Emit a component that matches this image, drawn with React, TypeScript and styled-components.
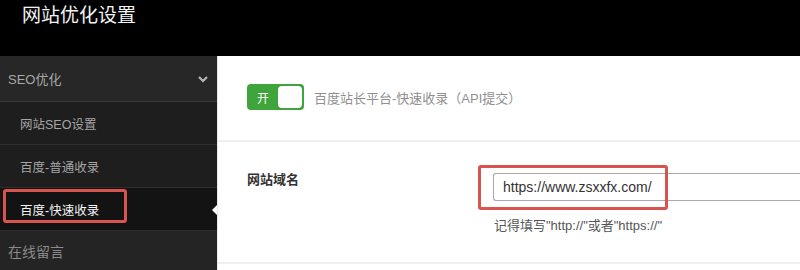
import styled, { createGlobalStyle } from "styled-components";

const Global = createGlobalStyle`
  html, body {
    margin: 0;
    padding: 0;
    background: #fff;
  }
  body {
    width: 800px;
    height: 270px;
    overflow: hidden;
    font-family: "Liberation Sans", "Noto Sans CJK SC", sans-serif;
  }
`;

const Page = styled.div`
  width: 800px;
  height: 270px;
  display: flex;
  flex-direction: column;
`;

const Header = styled.header`
  height: 56px;
  flex: none;
  background: #000;
  padding-left: 22px;
  box-sizing: border-box;
`;

const Title = styled.h1`
  margin: 0;
  font-size: 19px;
  font-weight: normal;
  line-height: 32px;
  color: #f2f2f2;
`;

const Body = styled.div`
  flex: 1;
  display: flex;
  min-height: 0;
`;

const Side = styled.nav`
  width: 217px;
  flex: none;
  background: #1e1e1e;
  display: flex;
  flex-direction: column;
`;

const GroupHead = styled.div`
  height: 45px;
  display: flex;
  align-items: center;
  justify-content: space-between;
  padding: 0 8px 0 8px;
  background: #272727;
  border-bottom: 1px solid #3a3a3a;
  color: #a8a8a8;
  font-size: 13px;
`;

const Item = styled.div<{ $active?: boolean }>`
  position: relative;
  height: 42px;
  display: flex;
  align-items: center;
  padding-left: 20px;
  font-size: 12.5px;
  color: ${(p) => (p.$active ? "#f5f5f5" : "#a5a5a5")};
  background: ${(p) => (p.$active ? "#131313" : "#1e1e1e")};
  border-bottom: 1px solid #2e2e2e;
`;

const Mark = styled.span`
  position: absolute;
  left: 3px;
  top: 1px;
  width: 124px;
  height: 34px;
  box-sizing: border-box;
  border: 3px solid #d9534f;
  border-radius: 3px;
`;

const Pointer = styled.span`
  position: absolute;
  right: 0;
  top: 17px;
  width: 0;
  height: 0;
  border-top: 5px solid transparent;
  border-bottom: 5px solid transparent;
  border-right: 5px solid #fff;
`;

const Group = styled.div`
  flex: 1;
  display: flex;
  align-items: center;
  padding-left: 8px;
  font-size: 14px;
  color: #8a8a8a;
  background: #242424;
`;

const Main = styled.main`
  flex: 1;
  background: #fff;
  border-left: 1px solid #e8e8e8;
  display: flex;
  flex-direction: column;
`;

const Section = styled.section<{ $h: number }>`
  height: ${(p) => p.$h}px;
  flex: none;
  box-sizing: border-box;
  border-bottom: 2px solid #efefef;
  padding-left: 29px;
`;

const SwitchRow = styled.div`
  display: flex;
  align-items: center;
  gap: 10px;
  padding-top: 28px;
`;

const Switch = styled.div`
  width: 57px;
  height: 26px;
  box-sizing: border-box;
  background: #3fa43b;
  border-radius: 4px;
  display: flex;
  align-items: center;
  justify-content: space-between;
  padding: 0 2px 0 10px;
  color: #fff;
  font-size: 12px;
`;

const Knob = styled.span`
  width: 24px;
  height: 22px;
  background: #fff;
  border-radius: 4px;
`;

const Hint = styled.span`
  font-size: 13px;
  color: #8f8f8f;
`;

const Field = styled.div`
  display: grid;
  grid-template-columns: 246px 1fr;
  padding-top: 31px;
`;

const Label = styled.label`
  font-size: 13px;
  font-weight: bold;
  color: #333;
  line-height: 14px;
`;

const Control = styled.div`
  position: relative;
`;

const Input = styled.input`
  display: block;
  width: 320px;
  height: 28px;
  box-sizing: border-box;
  border: 1px solid #a9a9a9;
  border-right: none;
  border-radius: 3px 0 0 3px;
  padding: 0 9px;
  font-family: "Liberation Sans", "Noto Sans CJK SC", sans-serif;
  font-size: 14px;
  color: #333;
  outline: none;
`;

const InputMark = styled.span`
  position: absolute;
  left: -15px;
  top: -8px;
  width: 190px;
  height: 45px;
  box-sizing: border-box;
  border: 3px solid #d9534f;
  border-radius: 3px;
`;

const Help = styled.p`
  margin: 14px 0 0 1px;
  font-size: 13px;
  color: #555;
`;

const Chevron = () => (
  <svg width="12" height="12" viewBox="0 0 12 12">
    <path d="M2 4l4 4 4-4" fill="none" stroke="#b5b5b5" strokeWidth="2.2" />
  </svg>
);

export default function App() {
  return (
    <Page>
      <Global />
      <Header>
        <Title>网站优化设置</Title>
      </Header>
      <Body>
        <Side>
          <GroupHead>
            SEO优化
            <Chevron />
          </GroupHead>
          <Item>网站SEO设置</Item>
          <Item>百度-普通收录</Item>
          <Item $active>
            <Mark />
            百度-快速收录
            <Pointer />
          </Item>
          <Group>在线留言</Group>
        </Side>
        <Main>
          <Section $h={86}>
            <SwitchRow>
              <Switch>
                开<Knob />
              </Switch>
              <Hint>百度站长平台-快速收录（API提交）</Hint>
            </SwitchRow>
          </Section>
          <Section $h={122}>
            <Field>
              <Label>网站域名</Label>
              <div>
                <Control>
                  <Input defaultValue="https://www.zsxxfx.com/" />
                  <InputMark />
                </Control>
                <Help>记得填写"http://"或者"https://"</Help>
              </div>
            </Field>
          </Section>
        </Main>
      </Body>
    </Page>
  );
}
